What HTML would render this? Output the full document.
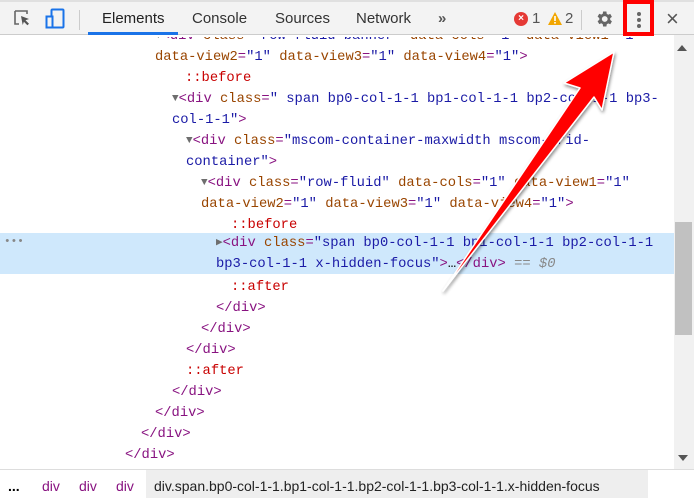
<!DOCTYPE html>
<html><head><style>
*{margin:0;padding:0;box-sizing:border-box}
body{width:694px;height:502px;overflow:hidden;background:#fff;position:relative;font-family:"Liberation Sans",sans-serif}
#tb{position:absolute;left:0;top:0;width:694px;height:35px;background:#f3f3f3;border-bottom:1px solid #ccc;border-top:2px solid #e0e0e0}
.tab{position:absolute;top:8px;font-size:15px;color:#333}
#code{position:absolute;left:0;top:37px;width:674px;height:432px;overflow:hidden;font-family:"Liberation Mono",monospace;font-size:13.8px}
.l{position:absolute;white-space:pre;height:21px;line-height:21px}
.t{color:#881280}.a{color:#994500}.v{color:#1a1aa6}.p{color:#c80000}.g{color:#888}
.tri{color:#6e6e6e;font-size:11px;vertical-align:1px}
#sb{position:absolute;left:674px;top:35px;width:20px;height:434px;background:#f1f1f1}
#bc{position:absolute;left:0;top:469px;width:694px;height:33px;background:#fff;border-top:1px solid #ddd;font-size:14px}
</style></head><body>
<div id="tb">
<svg style="position:absolute;left:13px;top:7px" width="20" height="20" viewBox="0 0 20 20"><path d="M2 2h12v3M2 2v13h4" fill="none" stroke="#666" stroke-width="1.6"/><path d="M8 7l8 3-3.5 1.2 3.5 3.5-1.6 1.6-3.5-3.5L9.7 16z" fill="#555"/></svg>
<svg style="position:absolute;left:45px;top:6px" width="22" height="24" viewBox="0 0 22 24"><rect x="6.5" y="1.5" width="12" height="18" fill="none" stroke="#1a73e8" stroke-width="2" rx="1"/><rect x="1.5" y="8.5" width="6" height="11" fill="#f3f3f3" stroke="#1a73e8" stroke-width="2"/></svg>
<div style="position:absolute;left:79px;top:8px;width:1px;height:20px;background:#ccc"></div>
<div class="tab" style="left:102px;color:#222">Elements</div>
<div style="position:absolute;left:88px;top:30px;width:90px;height:3px;background:#1a73e8"></div>
<div class="tab" style="left:192px">Console</div>
<div class="tab" style="left:275px">Sources</div>
<div class="tab" style="left:356px">Network</div>
<div class="tab" style="left:438px;font-weight:bold;color:#555">&#187;</div>
<div style="position:absolute;left:514px;top:10px;width:14px;height:14px;border-radius:50%;background:#e53935;color:#fff;font-size:10px;line-height:14px;text-align:center;font-weight:bold">×</div>
<div class="tab" style="left:532px;color:#555">1</div>
<svg style="position:absolute;left:548px;top:10px" width="14" height="13"><path d="M7 0L14 13H0z" fill="#f2a600"/><rect x="6.2" y="4" width="1.6" height="5" fill="#fff"/><rect x="6.2" y="10" width="1.6" height="1.6" fill="#fff"/></svg>
<div class="tab" style="left:565px;color:#555">2</div>
<div style="position:absolute;left:581px;top:8px;width:1px;height:20px;background:#ccc"></div>
<svg style="position:absolute;left:594px;top:7px" width="20" height="20" viewBox="0 0 24 24"><path fill="#666" d="M19.4 13a7.5 7.5 0 0 0 0-2l2.1-1.6-2-3.5-2.5 1a7 7 0 0 0-1.7-1L14.9 3h-4l-.4 2.7a7 7 0 0 0-1.7 1l-2.5-1-2 3.5L6.4 11a7.5 7.5 0 0 0 0 2l-2.1 1.6 2 3.5 2.5-1a7 7 0 0 0 1.7 1l.4 2.9h4l.4-2.7a7 7 0 0 0 1.7-1l2.5 1 2-3.5zM12.9 15.5a3.5 3.5 0 1 1 0-7 3.5 3.5 0 0 1 0 7z"/></svg>
<div style="position:absolute;left:623px;top:-2px;width:31px;height:36px;border:4px solid #f00"></div>
<div style="position:absolute;left:637px;top:10px;width:4px;height:4px;border-radius:50%;background:#666;box-shadow:0 6px 0 #666,0 12px 0 #666"></div>
<div class="tab" style="left:666px;top:4px;font-size:22px;color:#555">×</div>
</div>
<div id="code">
<div class="l" style="left:155px;top:-11px"><span class="tri">▼</span><span class="t">&lt;div</span> <span class="a">class</span><span class="t">=</span><span class="v">"row-fluid banner"</span> <span class="a">data-cols</span><span class="t">=</span><span class="v">"1"</span> <span class="a">data-view1</span><span class="t">=</span><span class="v">"1"</span></div>
<div class="l" style="left:155px;top:10px"><span class="a">data-view2</span><span class="t">=</span><span class="v">"1"</span> <span class="a">data-view3</span><span class="t">=</span><span class="v">"1"</span> <span class="a">data-view4</span><span class="t">=</span><span class="v">"1"</span><span class="t">&gt;</span></div>
<div class="l p" style="left:185px;top:31px">::before</div>
<div class="l" style="left:172px;top:52px"><span class="tri">▼</span><span class="t">&lt;div</span> <span class="a">class</span><span class="t">=</span><span class="v">" span bp0-col-1-1 bp1-col-1-1 bp2-col-1-1 bp3-</span></div>
<div class="l" style="left:172px;top:73px"><span class="v">col-1-1"</span><span class="t">&gt;</span></div>
<div class="l" style="left:186px;top:94px"><span class="tri">▼</span><span class="t">&lt;div</span> <span class="a">class</span><span class="t">=</span><span class="v">"mscom-container-maxwidth mscom-grid-</span></div>
<div class="l" style="left:186px;top:115px"><span class="v">container"</span><span class="t">&gt;</span></div>
<div class="l" style="left:201px;top:136px"><span class="tri">▼</span><span class="t">&lt;div</span> <span class="a">class</span><span class="t">=</span><span class="v">"row-fluid"</span> <span class="a">data-cols</span><span class="t">=</span><span class="v">"1"</span> <span class="a">data-view1</span><span class="t">=</span><span class="v">"1"</span></div>
<div class="l" style="left:201px;top:157px"><span class="a">data-view2</span><span class="t">=</span><span class="v">"1"</span> <span class="a">data-view3</span><span class="t">=</span><span class="v">"1"</span> <span class="a">data-view4</span><span class="t">=</span><span class="v">"1"</span><span class="t">&gt;</span></div>
<div class="l p" style="left:231px;top:178px">::before</div>
<div style="position:absolute;left:0;top:196px;width:674px;height:41px;background:#cfe8fc"></div>
<div class="l g" style="left:4px;top:195px;font-size:11px">•••</div>
<div class="l" style="left:216px;top:196px"><span class="tri">▶</span><span class="t">&lt;div</span> <span class="a">class</span><span class="t">=</span><span class="v">"span bp0-col-1-1 bp1-col-1-1 bp2-col-1-1</span></div>
<div class="l" style="left:216px;top:217px"><span class="v">bp3-col-1-1 x-hidden-focus"</span><span class="t">&gt;</span>…<span class="t">&lt;/div&gt;</span> <span class="g">== <i>$0</i></span></div>
<div class="l p" style="left:231px;top:240px">::after</div>
<div class="l t" style="left:216px;top:261px">&lt;/div&gt;</div>
<div class="l t" style="left:201px;top:282px">&lt;/div&gt;</div>
<div class="l t" style="left:186px;top:303px">&lt;/div&gt;</div>
<div class="l p" style="left:186px;top:324px">::after</div>
<div class="l t" style="left:172px;top:345px">&lt;/div&gt;</div>
<div class="l t" style="left:155px;top:366px">&lt;/div&gt;</div>
<div class="l t" style="left:141px;top:387px">&lt;/div&gt;</div>
<div class="l t" style="left:125px;top:408px">&lt;/div&gt;</div>
</div>
<div id="sb"><div style="position:absolute;left:3px;top:10px;border:5px solid transparent;border-bottom:6px solid #555;border-top:0"></div><div style="position:absolute;left:1px;top:187px;width:17px;height:113px;background:#c1c1c1"></div><div style="position:absolute;left:4px;top:420px;border:5px solid transparent;border-top:6px solid #555;border-bottom:0"></div></div>
<div id="bc">
<span style="position:absolute;left:8px;top:8px;font-weight:bold">...</span>
<span style="position:absolute;left:42px;top:8px;color:#881280">div</span>
<span style="position:absolute;left:79px;top:8px;color:#881280">div</span>
<span style="position:absolute;left:116px;top:8px;color:#881280">div</span>
<div style="position:absolute;left:146px;top:0;width:502px;height:28px;background:#eee"></div>
<span style="position:absolute;left:154px;top:8px;color:#222">div.span.bp0-col-1-1.bp1-col-1-1.bp2-col-1-1.bp3-col-1-1.x-hidden-focus</span>
</div>
<svg style="position:absolute;left:0;top:0" width="694" height="502">
<defs><filter id="s"><feDropShadow dx="1" dy="2" stdDeviation="1.5" flood-color="#000" flood-opacity="0.45"/></filter></defs>
<path d="M443 291L580 88L564 83L614 52L602 110L594 97Z" fill="#f00" stroke="#fff" stroke-width="1.5" stroke-linejoin="round" filter="url(#s)"/>
</svg>
</body></html>
